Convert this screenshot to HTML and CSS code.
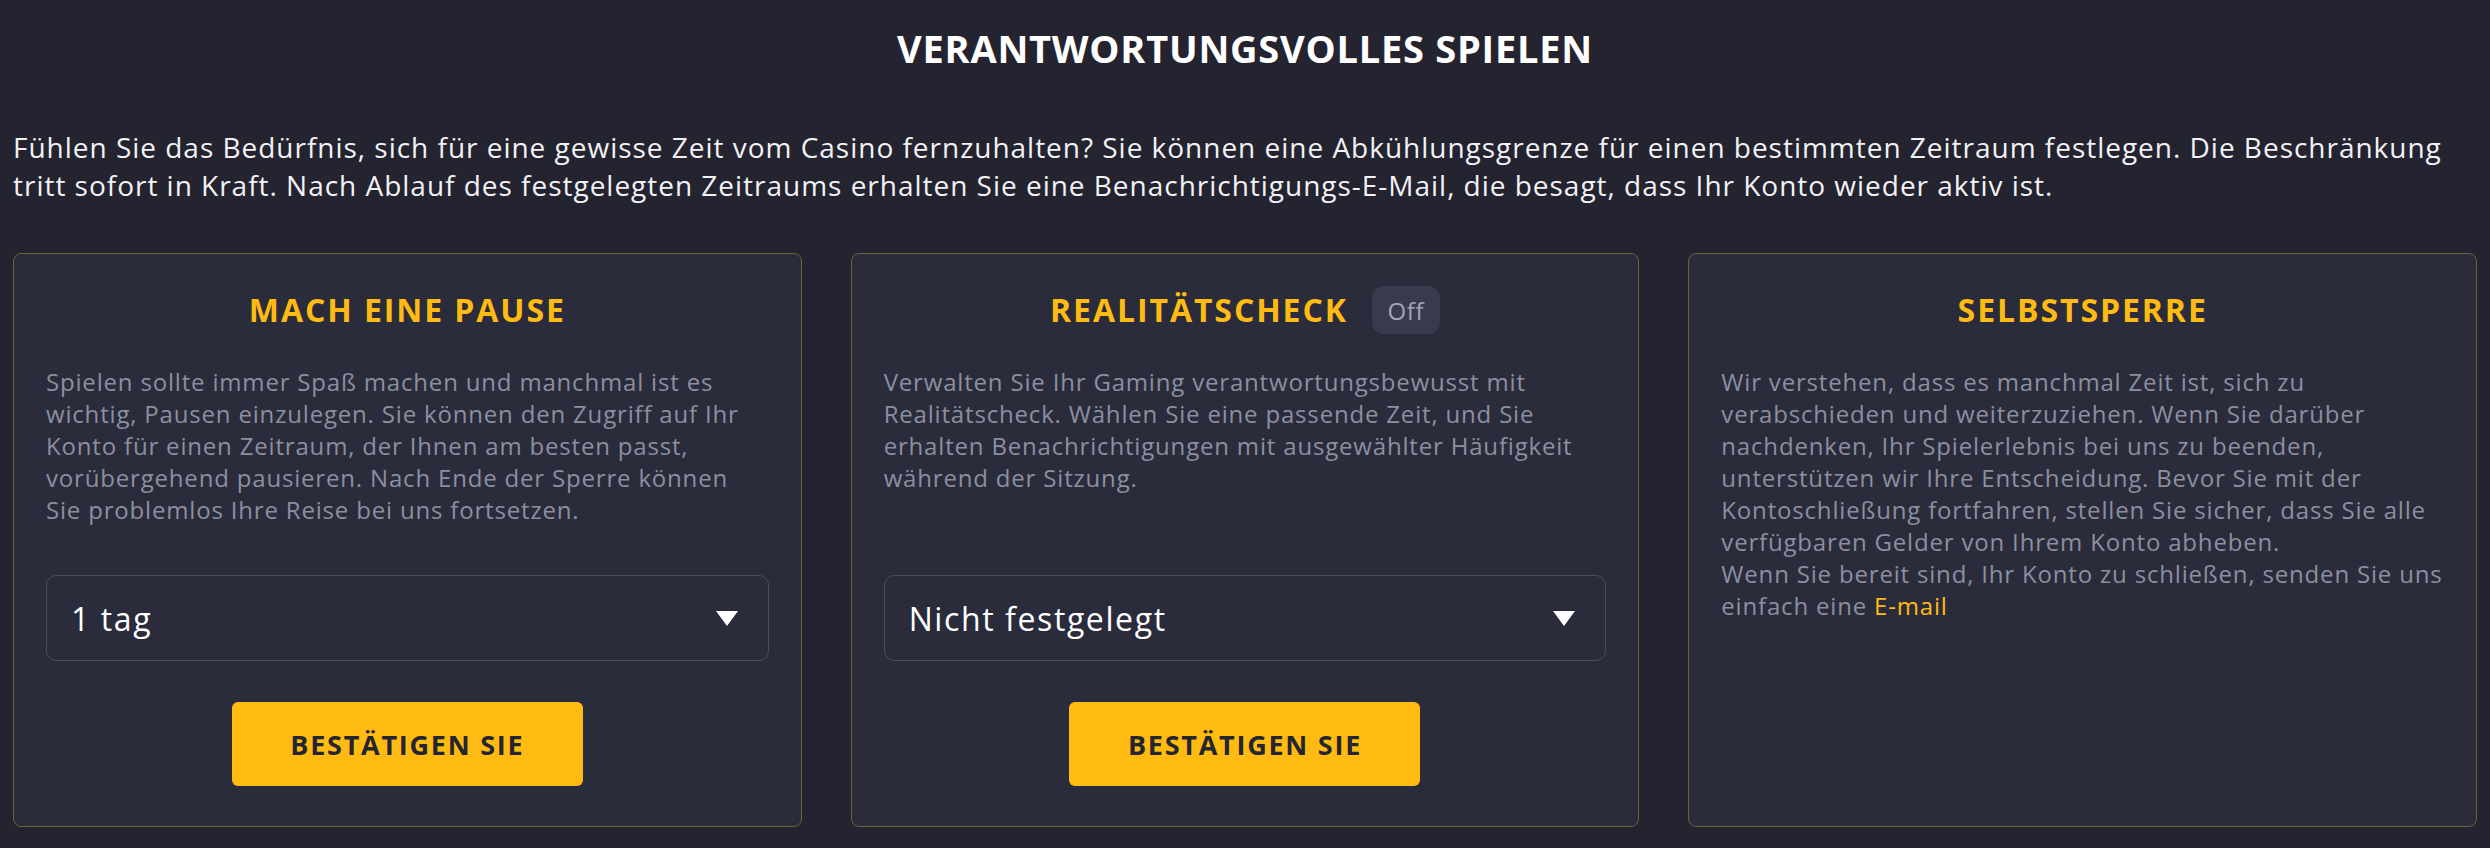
FILE: index.html
```html
<!DOCTYPE html>
<html lang="de">
<head>
<meta charset="utf-8">
<title>Verantwortungsvolles Spielen</title>
<link rel="stylesheet" href="styles.css">
</head>
<body>
<main class="page">
  <h1 class="page-title">VERANTWORTUNGSVOLLES SPIELEN</h1>
  <p class="intro">Fühlen Sie das Bedürfnis, sich für eine gewisse Zeit vom Casino fernzuhalten? Sie können eine Abkühlungsgrenze für einen bestimmten Zeitraum festlegen. Die Beschränkung tritt sofort in Kraft. Nach Ablauf des festgelegten Zeitraums erhalten Sie eine Benachrichtigungs-E-Mail, die besagt, dass Ihr Konto wieder aktiv ist.</p>
  <section class="cards">
    <div class="card">
      <div class="card-head"><h2 class="card-title">MACH EINE PAUSE</h2></div>
      <p class="card-text">Spielen sollte immer Spaß machen und manchmal ist es wichtig, Pausen einzulegen. Sie können den Zugriff auf Ihr Konto für einen Zeitraum, der Ihnen am besten passt, vorübergehend pausieren. Nach Ende der Sperre können Sie problemlos Ihre Reise bei uns fortsetzen.</p>
      <div class="select"><span class="select-value">1 tag</span><span class="caret"></span></div>
      <button class="btn">BESTÄTIGEN SIE</button>
    </div>
    <div class="card">
      <div class="card-head"><h2 class="card-title">REALITÄTSCHECK</h2><span class="badge">Off</span></div>
      <p class="card-text">Verwalten Sie Ihr Gaming verantwortungsbewusst mit Realitätscheck. Wählen Sie eine passende Zeit, und Sie erhalten Benachrichtigungen mit ausgewählter Häufigkeit während der Sitzung.</p>
      <div class="select"><span class="select-value">Nicht festgelegt</span><span class="caret"></span></div>
      <button class="btn">BESTÄTIGEN SIE</button>
    </div>
    <div class="card">
      <div class="card-head"><h2 class="card-title">SELBSTSPERRE</h2></div>
      <p class="card-text">Wir verstehen, dass es manchmal Zeit ist, sich zu verabschieden und weiterzuziehen. Wenn Sie darüber nachdenken, Ihr Spielerlebnis bei uns zu beenden, unterstützen wir Ihre Entscheidung. Bevor Sie mit der Kontoschließung fortfahren, stellen Sie sicher, dass Sie alle verfügbaren Gelder von Ihrem Konto abheben.<br>Wenn Sie bereit sind, Ihr Konto zu schließen, senden Sie uns einfach eine <a class="link" href="#">E-mail</a></p>
    </div>
  </section>
</main>
</body>
</html>
```
FILE: styles.css
```css
* { box-sizing: border-box; }
html, body {
  margin: 0;
  background: #23242f;
}
body {
  font-family: "Open Sans", "Liberation Sans", sans-serif;
  color: #ffffff;
}
.page {
  padding: 0 13px;
}
.page-title {
  margin: 0;
  padding-top: 25px;
  font-size: 38px;
  line-height: 46px;
  font-weight: 700;
  letter-spacing: 0.02em;
  text-align: center;
  color: #ffffff;
}
.intro {
  margin: 57px 0 0;
  font-size: 28px;
  line-height: 38px;
  letter-spacing: 0.035em;
  color: #f2f2f6;
}
.cards {
  margin-top: 49px;
  display: grid;
  grid-template-columns: repeat(3, 1fr);
  gap: 49px;
}
.card {
  display: flex;
  flex-direction: column;
  background: #2a2c3b;
  border: 1px solid #6f5f3a;
  border-radius: 8px;
  padding: 32px 32px 40px;
}
.card-head {
  display: flex;
  justify-content: center;
  align-items: center;
  gap: 24px;
  height: 48px;
}
.card-title {
  margin: 0;
  font-size: 32px;
  line-height: 48px;
  font-weight: 700;
  letter-spacing: 0.06em;
  color: #ffbb12;
}
.badge {
  display: inline-flex;
  align-items: center;
  justify-content: center;
  width: 68px;
  height: 48px;
  border-radius: 12px;
  background: #383a4d;
  color: #a2a4b6;
  font-size: 24px;
  letter-spacing: 0.03em;
}
.card-text {
  margin: 32px 0 49px;
  font-size: 24px;
  line-height: 32px;
  letter-spacing: 0.82px;
  color: #8c8fa0;
}
.link {
  color: #ffbb12;
  text-decoration: none;
}
.select {
  margin-top: auto;
  height: 86px;
  border: 1px solid #4a4c5d;
  border-radius: 10px;
  display: flex;
  align-items: center;
  justify-content: space-between;
  padding: 0 30px 0 24px;
}
.select-value {
  font-size: 32px;
  letter-spacing: 0.05em;
  color: #ffffff;
}
.caret {
  width: 0;
  height: 0;
  border-left: 11px solid transparent;
  border-right: 11px solid transparent;
  border-top: 15px solid #ffffff;
}
.btn {
  margin-top: 41px;
  align-self: center;
  width: 351px;
  height: 84px;
  border: 0;
  border-radius: 6px;
  background: #ffbb12;
  color: #25252f;
  font-family: inherit;
  font-size: 27px;
  font-weight: 700;
  letter-spacing: 0.065em;
}
```
